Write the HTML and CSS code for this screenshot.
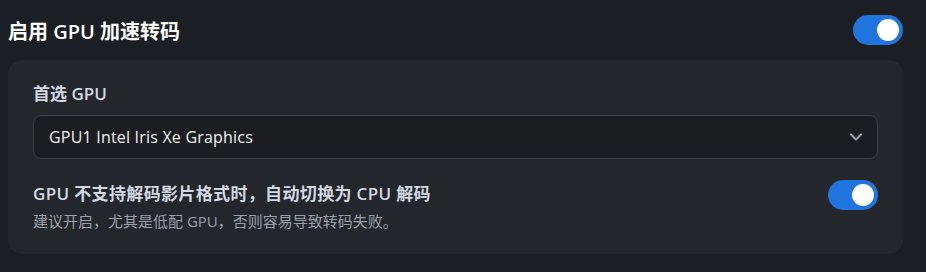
FILE: index.html
```html
<!DOCTYPE html>
<html lang="zh-CN">
<head>
<meta charset="utf-8">
<link rel="stylesheet" href="styles.css">
</head>
<body>
<div class="page">
  <div class="header">
    <h1 class="title">启用 GPU 加速转码</h1>
    <span class="toggle on"><span class="knob"></span></span>
  </div>
  <div class="card">
    <div class="label">首选 GPU</div>
    <div class="select">
      <span class="select-text">GPU1 Intel Iris Xe Graphics</span>
      <svg class="chevron" width="16" height="16" viewBox="0 0 16 16"><path d="M3 5.5 L8 10.5 L13 5.5" fill="none" stroke="#9ea3aa" stroke-width="2" stroke-linecap="round" stroke-linejoin="round"/></svg>
    </div>
    <div class="option">
      <div class="option-text">
        <div class="option-title">GPU 不支持解码影片格式时，自动切换为 CPU 解码</div>
        <div class="option-desc">建议开启，尤其是低配 GPU，否则容易导致转码失败。</div>
      </div>
      <span class="toggle on"><span class="knob"></span></span>
    </div>
  </div>
</div>
</body>
</html>
```
FILE: styles.css
```css
* { box-sizing: border-box; }
html, body {
  margin: 0;
  padding: 0;
  background: #1b1e22;
}
body {
  font-family: "Open Sans", "Noto Sans CJK SC", sans-serif;
  color: #ffffff;
}
.page {
  width: 926px;
  height: 272px;
  padding: 14px 23px 0 8px;
}
.header {
  display: flex;
  align-items: center;
  justify-content: space-between;
  height: 32px;
}
.title {
  margin: 0;
  font-size: 20px;
  font-weight: 600;
  color: #ffffff;
}
.toggle {
  display: flex;
  align-items: center;
  justify-content: flex-end;
  width: 50px;
  height: 30px;
  border-radius: 15px;
  background: #1f74de;
  padding: 4px;
  flex: none;
}
.knob {
  width: 22px;
  height: 22px;
  border-radius: 50%;
  background: #ffffff;
}
.card {
  margin-top: 14px;
  background: #23262b;
  border-radius: 14px;
  padding: 22px 25px 24px 25px;
  height: 194px;
}
.label {
  font-size: 17px;
  font-weight: 600;
  color: #d3d9e4;
  line-height: 24px;
}
.select {
  margin-top: 9px;
  height: 44px;
  border: 1px solid #3b3e44;
  border-radius: 8px;
  background: #1b1d21;
  display: flex;
  align-items: center;
  justify-content: space-between;
  padding: 0 13px 0 15px;
}
.select-text {
  font-size: 16px;
  letter-spacing: 0.2px;
  color: #f2f3f5;
}
.chevron { display: block; }
.option {
  margin-top: 21px;
  display: flex;
  align-items: flex-start;
  justify-content: space-between;
}
.option-title {
  font-size: 17px;
  font-weight: 600;
  letter-spacing: 0.35px;
  color: #d3d9e4;
  line-height: 28px;
}
.option-desc {
  margin-top: 3px;
  font-size: 15px;
  color: #99a0aa;
  line-height: 20px;
}
```
